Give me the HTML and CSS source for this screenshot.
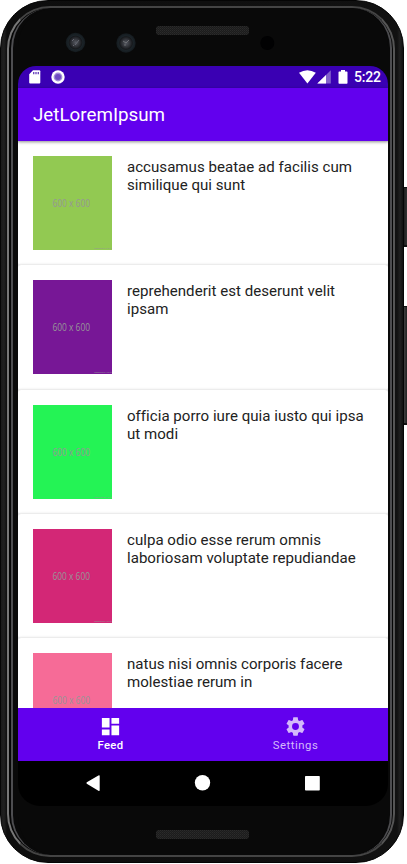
FILE: index.html
```html
<!DOCTYPE html>
<html lang="en">
<head>
<meta charset="utf-8">
<title>JetLoremIpsum</title>
<link rel="stylesheet" href="styles.css">
</head>
<body>
<div class="device">
  <i class="key power"></i>
  <i class="key volume"></i>
  <div class="shell"><div class="rim"><div class="groove"><div class="glass">
    <header class="bezel-top">
      <svg width="369" height="56" viewBox="18 10 369 56">
        <defs>
          <pattern id="mesh" width="2" height="2" patternUnits="userSpaceOnUse"><rect width="2" height="2" fill="#1c1c1c"/><rect width="1" height="1" fill="#2b2b2b"/><rect x="1" y="1" width="1" height="1" fill="#252525"/></pattern>
          <radialGradient id="lens"><stop offset="0" stop-color="#555861"/><stop offset=".45" stop-color="#2c2e33"/><stop offset=".65" stop-color="#17191c"/><stop offset=".75" stop-color="#1b2328"/><stop offset="1" stop-color="#141a1e"/></radialGradient>
        </defs>
        <circle cx="75.500" cy="42.500" r="9.700" fill="url(#lens)"/>
        <path d="M72 41l2-2M75 45l4-5M73 45l1 1" stroke="#70727c" stroke-width=".8"/>
        <circle cx="126" cy="43" r="9.700" fill="url(#lens)"/>
        <path d="M123 41l3 2 3-3M124 45h2" stroke="#77787c" stroke-width=".8" fill="none"/>
        <rect x="156" y="26" width="93" height="9" rx="3" fill="url(#mesh)"/>
        <circle cx="267.300" cy="43" r="7" fill="#010102"/>
      </svg>
    </header>
    <main class="screen">
      <div class="status">
        <svg class="sd" width="12" height="14" viewBox="0 0 12 14"><path d="M4 .3h6.300q1 0 1 1v11.200q0 1-1 1H1.200q-1 0-1-1V4.200z" fill="#fff"/><path d="M4 2h1.400v2.300H4zM6.300 2h1.400v2.300H6.300zM8.600 2H10v2.300H8.600z" fill="#6b46bd"/></svg>
        <svg class="dot" width="14" height="14" viewBox="0 0 14 14"><circle cx="7" cy="7" r="6.700" fill="#fff"/><circle cx="7" cy="7" r="4.400" fill="#a28bd8"/><circle cx="7" cy="7" r="3" fill="#6f4bc2"/></svg>
        <svg class="signals" width="50" height="14" viewBox="0 0 50 14"><path d="M0 2.800Q8.400-2.500 16.800 2.800L8.400 13.400z" fill="#fff"/><path d="M31.800 .2v13.300H18.300z" fill="#8260cb"/><path d="M27 5v8.500h-8.700z" fill="#fff"/><path d="M42 0h4v1.500h1.800q.7 0 .7.700v10.800q0 .7-.7.700h-7.600q-.7 0-.7-.7V2.200q0-.7.7-.7H42z" fill="#fff"/></svg>
        <span class="clock">5:22</span>
      </div>
      <div class="appbar">JetLoremIpsum</div>
      <div class="feed">
        <article class="card"><svg class="thumb green" viewBox="0 0 79 94"><text x="19.500" y="51.300" textLength="37.500" lengthAdjust="spacingAndGlyphs">600 x 600</text><text class="credit" x="61" y="93" textLength="18">Powered by HTML</text></svg><p>accusamus beatae ad facilis cum similique qui sunt</p></article>
        <article class="card"><svg class="thumb purple" viewBox="0 0 79 94"><text x="19.500" y="51.300" textLength="37.500" lengthAdjust="spacingAndGlyphs">600 x 600</text><text class="credit" x="61" y="93" textLength="18">Powered by HTML</text></svg><p>reprehenderit est deserunt velit ipsam</p></article>
        <article class="card"><svg class="thumb lime" viewBox="0 0 79 94"><text x="19.500" y="51.300" textLength="37.500" lengthAdjust="spacingAndGlyphs">600 x 600</text><text class="credit" x="61" y="93" textLength="18">Powered by HTML</text></svg><p>officia porro iure quia iusto qui ipsa ut modi</p></article>
        <article class="card"><svg class="thumb magenta" viewBox="0 0 79 94"><text x="19.500" y="51.300" textLength="37.500" lengthAdjust="spacingAndGlyphs">600 x 600</text><text class="credit" x="61" y="93" textLength="18">Powered by HTML</text></svg><p>culpa odio esse rerum omnis laboriosam voluptate repudiandae</p></article>
        <article class="card"><svg class="thumb pink" viewBox="0 0 79 94"><text x="19.500" y="51.300" textLength="37.500" lengthAdjust="spacingAndGlyphs">600 x 600</text></svg><p>natus nisi omnis corporis facere molestiae rerum in</p></article>
      </div>
      <nav class="tabs">
        <div class="tab"><svg viewBox="0 0 24 24"><path d="M3 13h8V3H3v10zm0 8h8v-6H3v6zm10 0h8V11h-8v10zm0-18v6h8V3h-8z"/></svg><span>Feed</span></div>
        <div class="tab idle"><svg viewBox="0 0 24 24"><path d="M19.140 12.940c.04-.3.06-.61.06-.94 0-.32-.02-.64-.07-.94l2.030-1.580c.18-.14.23-.41.12-.61l-1.920-3.320c-.12-.22-.37-.29-.59-.22l-2.390.96c-.5-.38-1.030-.7-1.620-.94l-.36-2.540c-.04-.24-.24-.41-.48-.41h-3.840c-.24 0-.43.17-.47.41l-.36 2.540c-.59.24-1.130.57-1.620.94l-2.390-.96c-.22-.08-.47 0-.59.22L2.740 8.870c-.12.21-.08.47.12.61l2.030 1.580c-.05.3-.09.63-.09.94s.02.64.07.94l-2.030 1.580c-.18.14-.23.41-.12.61l1.920 3.320c.12.22.37.29.59.22l2.390-.96c.5.38 1.030.7 1.620.94l.36 2.540c.05.24.24.41.48.41h3.840c.24 0 .44-.17.47-.41l.36-2.540c.59-.24 1.130-.56 1.620-.94l2.390.96c.22.08.47 0 .59-.22l1.920-3.320c.12-.22.07-.47-.12-.61l-2.010-1.580zM12 15.600A3.600 3.600 0 1 1 12 8.400a3.600 3.600 0 0 1 0 7.200z"/></svg><span>Settings</span></div>
      </nav>
      <div class="system">
        <svg width="370" height="45" viewBox="0 0 370 45" fill="#fff"><path d="M68.800 21.300L80.400 14.400q1.300-.7 1.300.7v13.800q0 1.500-1.300.8L68.800 22.700q-.8-.7 0-1.400z"/><circle cx="184.500" cy="21.800" r="7.700"/><rect x="287" y="15" width="14.800" height="14.500" rx=".8"/></svg>
      </div>
    </main>
    <footer class="bezel-bottom"><svg width="93" height="9"><rect width="93" height="9" rx="3" fill="url(#mesh)"/></svg></footer>
  </div></div></div></div>
</div>
</body>
</html>
```
FILE: styles.css
```css
* { box-sizing: border-box; }
body { margin: 0; background: #fff; font-family: Roboto, sans-serif; overflow: hidden; }
.device { position: relative; width: 407px; height: 864px; }
.key { position: absolute; right: 0; width: 5px; background: linear-gradient(90deg, #111, #333); border: solid #111; border-width: 1px 0 2px; }
.power { top: 187px; height: 60px; }
.volume { top: 306px; height: 119px; background: linear-gradient(90deg, #555, #222); }
.shell {
  position: relative; width: 404px; height: 863px; padding: 5px 8px 6px 6px;
  border-radius: 48px; border: 1px solid #050505;
  background: linear-gradient(90deg, #191919 0, #202020 3px, #0d0d0d 6px, #111 396px, #202020 399px, #0b0b0b 403px);
}
.rim {
  height: 851px; border-radius: 43px; border: solid; border-width: 2px 2px 2px 2px;
  border-color: #444 #555 #444 #777; background: #050505; padding: 0 1px 0 2px;
}
.groove {
  height: 847px; border-radius: 40px; border: solid; border-width: 0 2px;
  border-color: #4d4d50; background: #090909; padding: 0 0 0 4px;
}
.glass { height: 847px; display: flex; flex-direction: column; background: #090909; border-radius: 38px; width: 370px; margin-left: 1px; }
.bezel-top { height: 58px; flex: none; }
.bezel-top svg { display: block; margin-top: 2px; }
.screen { width: 370px; height: 740px; flex: none; display: flex; flex-direction: column; overflow: hidden; border-radius: 18px 18px 22px 22px; background: #000; }
.status { height: 22px; flex: none; background: #3a00b3; display: flex; align-items: flex-start; padding: 4px 7px 0 11px; }
.dot { margin-left: 10px; }
.signals { margin-left: auto; }
.clock { color: #fff; font-size: 14px; font-weight: 500; line-height: 15px; width: 27px; margin-left: 5px; white-space: nowrap; letter-spacing: -.2px; }
.appbar { height: 53px; flex: none; background: #6200ee; color: #fff; font-size: 18.800px; line-height: 54px; padding-left: 15px; letter-spacing: 0; position: relative; box-shadow: 0 1px 3px rgba(0,0,0,.45); z-index: 2; }
.feed { height: 567px; flex: none; overflow: hidden; background: #fff; }
.card { height: 124.250px; display: flex; gap: 15px; padding: 15px 15px 0; background: #fff; position: relative; border-radius: 3px; box-shadow: 0 0 3px rgba(0,0,0,.22); }
.card p { margin: 2px 0 0; width: 240px; font-size: 15.070px; line-height: 18px; letter-spacing: .02px; color: #222; }
.thumb { width: 79px; height: 94px; flex: none; }
.thumb text { font-family: "Open Sans", sans-serif; font-size: 10.600px; fill: #969696; }
.thumb .credit { font-size: 2.500px; }
.green { background: #92c952; }
.purple { background: #771796; }
.lime { background: #24f355; }
.magenta { background: #d32776; }
.pink { background: #f66b97; }
.tabs { height: 53px; flex: none; display: flex; background: #6200ee; }
.tab { flex: 1; display: flex; flex-direction: column; align-items: center; color: #fff; padding-top: 7px; font-size: 11.300px; line-height: 14px; letter-spacing: .4px; font-weight: 500; }
.tab svg { width: 23px; height: 23px; fill: currentColor; }
.tab span { padding-top: 1px; }
.idle { color: #d4b9fa; font-weight: 400; letter-spacing: .55px; }
.system { height: 45px; flex: none; }
.system svg { display: block; }
.bezel-bottom { padding: 24px 0 0 138px; }
.bezel-bottom svg { display: block; }
```
